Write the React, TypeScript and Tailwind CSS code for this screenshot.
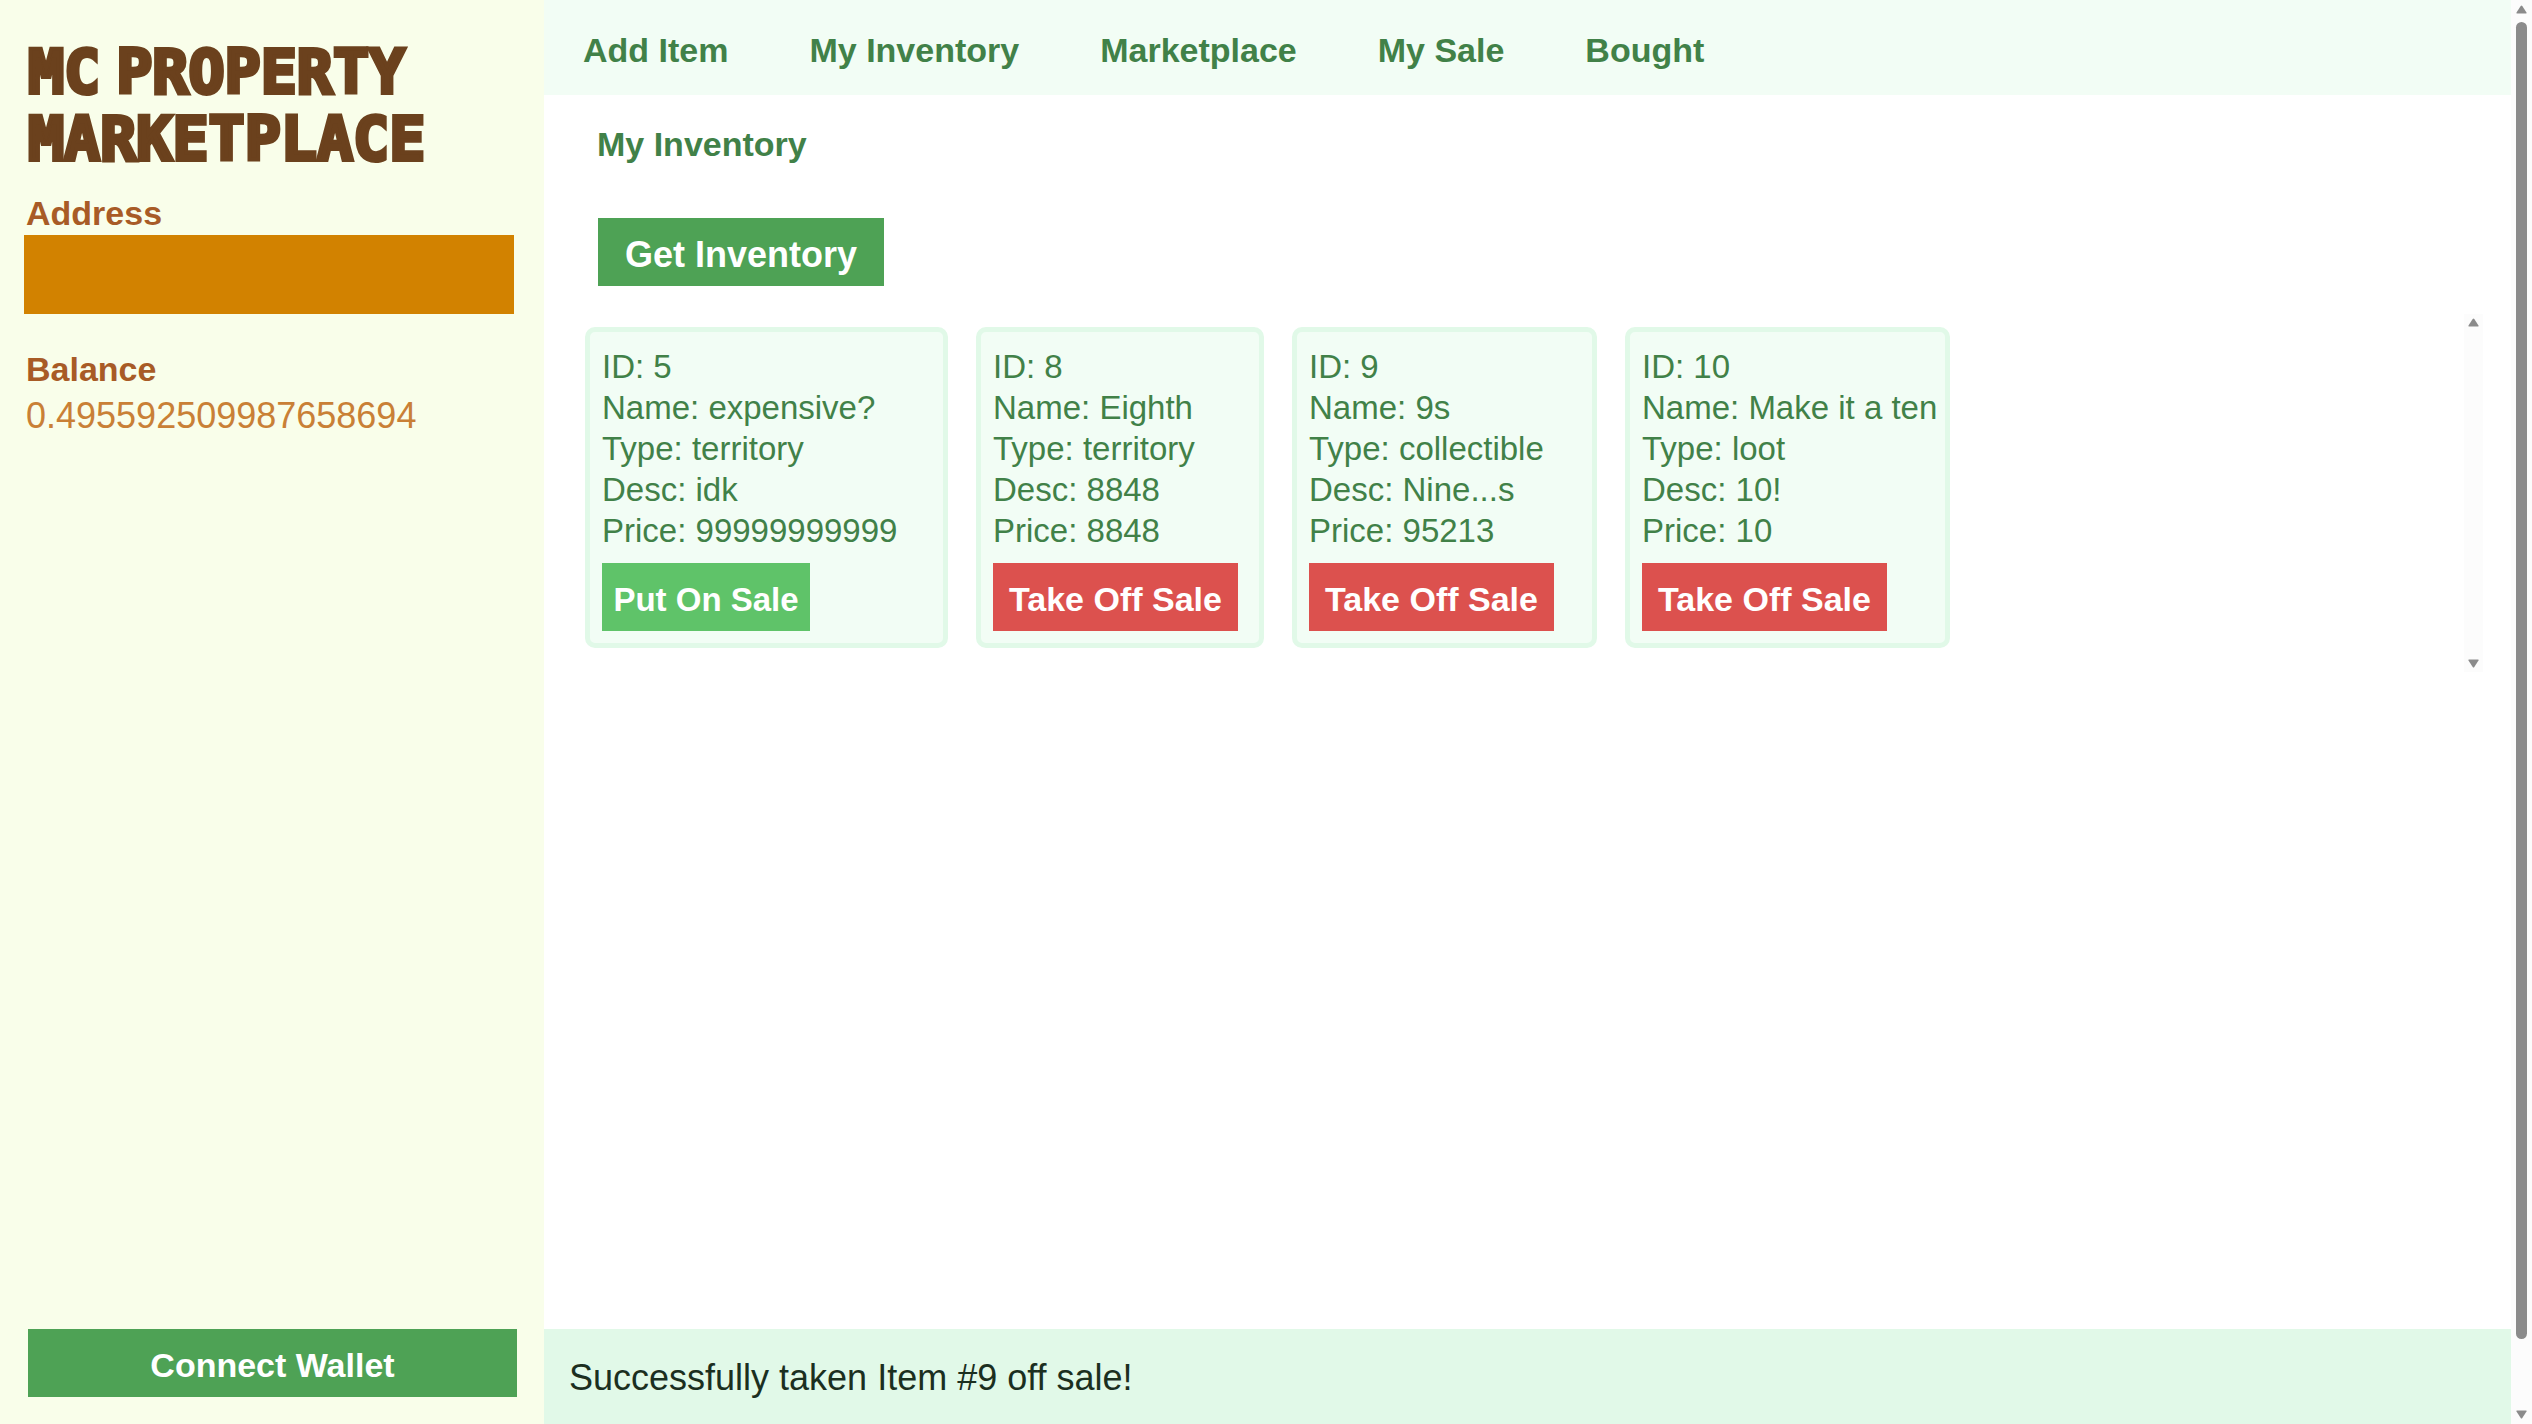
type Item = {
  id: number;
  name: string;
  kind: string;
  desc: string;
  price: string;
  onSale: boolean;
  width: string;
};

const navLinks = ["Add Item", "My Inventory", "Marketplace", "My Sale", "Bought"];

const items: Item[] = [
  { id: 5, name: "expensive?", kind: "territory", desc: "idk", price: "99999999999", onSale: false, width: "w-[363px]" },
  { id: 8, name: "Eighth", kind: "territory", desc: "8848", price: "8848", onSale: true, width: "w-[288px]" },
  { id: 9, name: "9s", kind: "collectible", desc: "Nine...s", price: "95213", onSale: true, width: "w-[305px]" },
  { id: 10, name: "Make it a ten", kind: "loot", desc: "10!", price: "10", onSale: true, width: "w-[325px]" },
];

function Arrow({ down = false }: { down?: boolean }) {
  return (
    <svg viewBox="0 0 11 9" className="h-[9px] w-[11px] shrink-0" aria-hidden="true">
      <path
        d={down ? "M1 0.5h9q1 0 .5 1L6.3 8q-.8 1-1.6 0L.5 1.5Q0 .5 1 .5z" : "M1 8.5h9q1 0 .5-1L6.3 1q-.8-1-1.6 0L.5 7.5q-.5 1 .5 1z"}
        fill="#8b8b8b"
      />
    </svg>
  );
}

function ItemCard({ item }: { item: Item }) {
  return (
    <li
      className={`${item.width} shrink-0 whitespace-nowrap rounded-[10px] border-[5px] border-[#e1f9e8] bg-[#f2fdf5] px-3 pt-[14px] pb-3 text-[33px] leading-[41px] text-[#418148]`}
    >
      <p>ID: {item.id}</p>
      <p>Name: {item.name}</p>
      <p>Type: {item.kind}</p>
      <p>Desc: {item.desc}</p>
      <p>Price: {item.price}</p>
      {item.onSale ? (
        <button type="button" className="mt-3 block h-[68px] w-[245px] bg-[#dc514e] pt-1 text-[34px] font-bold text-white">
          Take Off Sale
        </button>
      ) : (
        <button type="button" className="mt-3 block h-[68px] w-[208px] bg-[#5fc369] pt-1 text-[33px] font-bold text-white">
          Put On Sale
        </button>
      )}
    </li>
  );
}

export default function App() {
  return (
    <div className="flex min-h-screen bg-white font-['Liberation_Sans',Arial,sans-serif] text-[34px] leading-[41px]">
      <aside className="flex w-[544px] shrink-0 flex-col bg-[#f9feea] pt-[39px] pb-[27px]">
        <h1 className="flex flex-wrap gap-x-4 px-7 font-['DejaVu_Sans_Mono',monospace] text-[60px] leading-[67px] font-bold text-[#6b411d] [-webkit-text-stroke:4px_#6b411d]">
          <span>MC </span>
          <span>PROPERTY </span>
          <span>MARKETPLACE</span>
        </h1>
        <h2 className="mt-5 px-[26px] font-bold text-[#a85b26]">Address</h2>
        <div className="mt-px mr-[30px] ml-6 h-[79px] bg-[#d28200]" />
        <h2 className="mt-[35px] px-[26px] font-bold text-[#a85b26]">Balance</h2>
        <p className="mt-[5px] px-[26px] text-[36px] text-[#c98036]">0.495592509987658694</p>
        <button type="button" className="mt-auto mr-[27px] ml-7 h-[68px] bg-[#4ea255] pt-1 font-bold text-white">
          Connect Wallet
        </button>
      </aside>

      <div className="flex min-w-0 flex-1 flex-col">
        <nav className="flex h-[95px] items-center gap-[81px] bg-[#f2fdf5] pt-[5px] pl-[39px] font-bold text-[#418148]">
          {navLinks.map((label) => (
            <a key={label} href="#" className="whitespace-nowrap">
              {label}
            </a>
          ))}
        </nav>

        <main className="flex-1 pt-[29px] pr-7 pl-[41px]">
          <h2 className="pl-3 font-bold text-[#418148]">My Inventory</h2>
          <button type="button" className="mt-[53px] ml-[13px] block h-[68px] w-[286px] bg-[#4ea255] pt-1 text-[36px] font-bold text-white">
            Get Inventory
          </button>
          <section aria-label="Items" className="mt-7 flex h-[358px] justify-between">
            <ul className="flex items-start gap-7 pt-[13px]">
              {items.map((item) => (
                <ItemCard key={item.id} item={item} />
              ))}
            </ul>
            <div className="flex w-[19px] flex-col items-center justify-between bg-[#fcfcfc] py-1">
              <Arrow />
              <Arrow down />
            </div>
          </section>
        </main>

        <footer role="status" className="flex h-[95px] items-center bg-[#e1f9e8] pt-0.5 pl-[25px] text-[36px] text-[#1b2f1f]">
          Successfully taken Item #9 off sale!
        </footer>
      </div>

      <div className="flex w-[21px] shrink-0 flex-col items-center bg-[#fcfcfc] pt-[5px] pb-[5px]">
        <Arrow />
        <div className="mt-2 mb-[71px] w-[11px] flex-1 rounded-full bg-[#8b8b8b]" />
        <Arrow down />
      </div>
    </div>
  );
}
